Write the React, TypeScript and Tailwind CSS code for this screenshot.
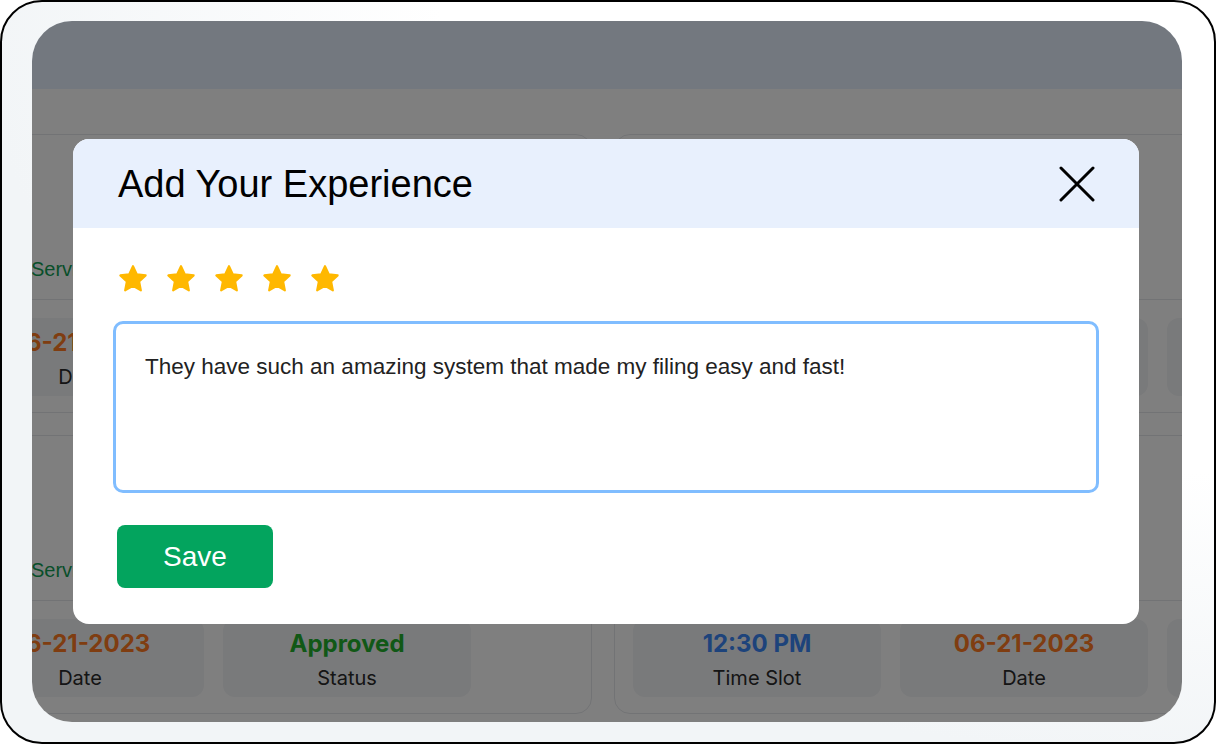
const bookings = [
  { time: "12:30 PM", date: "06-21-2023", status: "Approved" },
  { time: "12:30 PM", date: "06-21-2023", status: "Approved" },
  { time: "12:30 PM", date: "06-21-2023", status: "Approved" },
  { time: "12:30 PM", date: "06-21-2023", status: "Approved" },
]

function InfoBox({ value, label, color }: { value: string; label: string; color: string }) {
  return (
    <div className="w-[248px] h-[78px] shrink-0 rounded-[12px] bg-gray-100 flex flex-col items-center pt-[10px] gap-[6px]">
      <div className={`text-[24px] leading-[30px] font-bold whitespace-nowrap ${color}`}>{value}</div>
      <div className="text-[20px] leading-[26px] text-[#2a2a2a]">{label}</div>
    </div>
  )
}

function BookingCard({ b }: { b: (typeof bookings)[number] }) {
  return (
    <div className="w-[922px] h-[279px] shrink-0 rounded-[16px] border border-gray-200 bg-white overflow-hidden">
      <div className="h-[165px] border-b border-gray-200 px-[18px] pt-[18px] flex gap-[16px]">
        <div className="w-[326px] h-[129px] rounded-[12px] bg-gray-100" />
        <div className="flex flex-col justify-end pb-[16px]">
          <div className="text-[20px] leading-[28px] text-[#119e55] font-['Liberation_Sans',sans-serif]">Service: Tax</div>
        </div>
      </div>
      <div className="flex gap-[19px] px-[18px] pt-[18px]">
        <InfoBox value={b.time} label="Time Slot" color="text-[#3b86f7]" />
        <InfoBox value={b.date} label="Date" color="text-[#ff7a22]" />
        <InfoBox value={b.status} label="Status" color="text-[#22b02c]" />
      </div>
    </div>
  )
}

function Star() {
  return (
    <svg width="32" height="32" viewBox="0 0 24 24" className="shrink-0">
      <path
        d="M12 2.4l2.9 6.1 6.6.8-4.9 4.6 1.3 6.6L12 17.2l-5.9 3.3 1.3-6.6-4.9-4.6 6.6-.8z"
        fill="#ffb800"
        stroke="#ffb800"
        strokeWidth="1.6"
        strokeLinejoin="round"
      />
    </svg>
  )
}

export default function App() {
  return (
    <div className="w-[1216px] h-[744px] bg-white font-['Inter',sans-serif]">
      <div className="h-full rounded-[42px] border-2 border-black bg-[radial-gradient(ellipse_at_top_right,#ffffff_45%,#f2f5f7_72%)] pl-[30px] pt-[19px] pr-[32px] pb-[20px]">
        <div className="relative h-full rounded-[40px] overflow-hidden bg-white">
          {/* header */}
          <div className="h-[68px] bg-[#e6f0fe]" />

          {/* bookings, scrolled sideways */}
          <div className="pt-[45px] ml-[-362px] grid grid-cols-[922px_922px] gap-[22px]">
            {bookings.map((b, i) => (
              <BookingCard key={i} b={b} />
            ))}
          </div>

          {/* modal */}
          <div className="absolute inset-0 bg-black/50 flex pl-[41px] pt-[118px]">
            <div className="w-[1066px] h-[485px] rounded-[16px] bg-white overflow-hidden font-['Liberation_Sans',Arial,sans-serif]">
              <div className="h-[89px] bg-[#e8f0fd] flex items-center justify-between pl-[45px] pr-[44px]">
                <h2 className="text-[38px] leading-none text-black">Add Your Experience</h2>
                <svg width="36" height="36" viewBox="0 0 36 36" fill="none" stroke="#000" strokeWidth="3" strokeLinecap="round">
                  <path d="M2 2l32 32M34 2L2 34" />
                </svg>
              </div>

              <div className="px-[40px] pt-[35px] pb-[36px]">
                <div className="flex gap-[16px] ml-[4px]">
                  <Star />
                  <Star />
                  <Star />
                  <Star />
                  <Star />
                </div>

                <textarea
                  className="mt-[26px] block w-full h-[172px] resize-none rounded-[10px] border-[3px] border-[#80bdff] px-[29px] pt-[27px] pb-[10px] text-[22.5px] leading-[32px] text-[#222] outline-none"
                  defaultValue="They have such an amazing system that made my filing easy and fast!"
                />

                <button className="mt-[32px] ml-[4px] w-[156px] h-[63px] rounded-[8px] bg-[#03a45e] text-white text-[28px]">
                  Save
                </button>
              </div>
            </div>
          </div>
        </div>
      </div>
    </div>
  )
}
